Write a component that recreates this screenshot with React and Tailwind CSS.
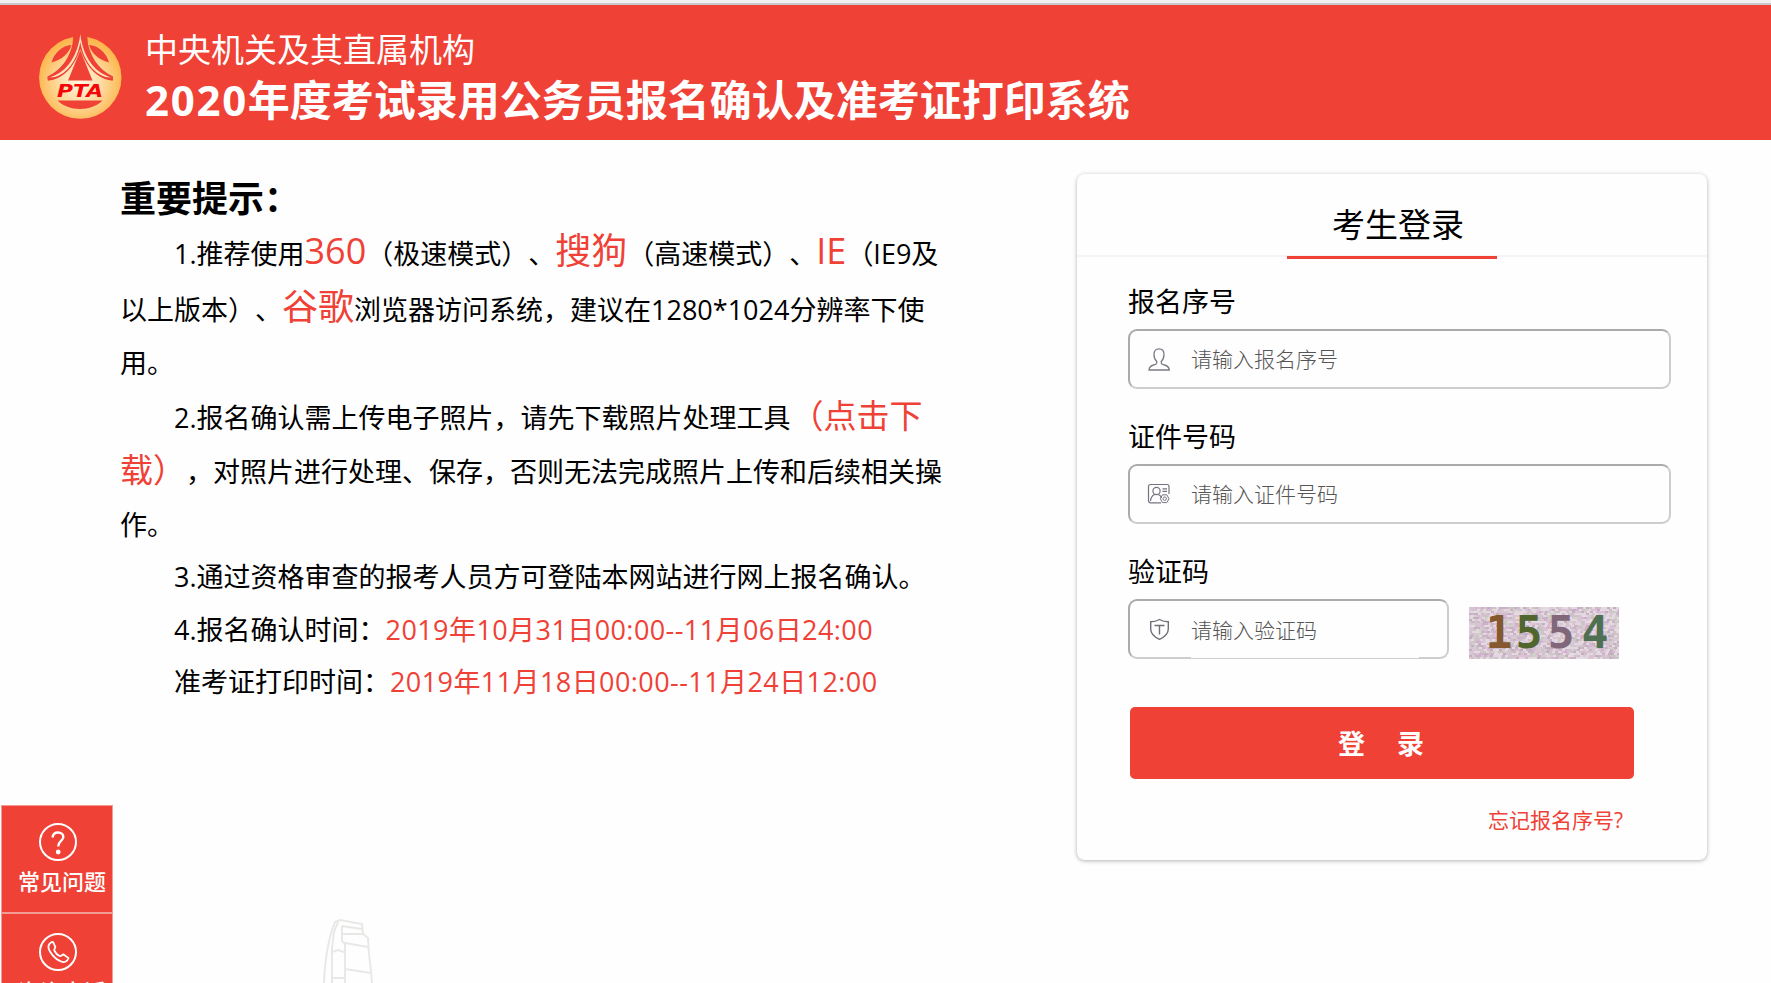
const noise = (() => {
  const colors = ["#d8c4d4", "#c9a9c6", "#e4dbe3", "#cfd0c8", "#d3b3cd", "#bba6b8", "#e6dfdc", "#c4c6bb", "#d9bfd3", "#eadfea"]
  const cells = []
  let seed = 1554
  for (let y = 0; y < 52; y += 2) {
    for (let x = 0; x < 150; x += 3) {
      seed = (seed * 16807) % 2147483647
      cells.push({ x: x + (y % 3), y, fill: colors[seed % colors.length] })
    }
  }
  return cells
})()

function Logo() {
  return (
    <svg className="w-[84px] h-[86px] shrink-0" viewBox="0 0 84 86">
      <defs>
        <radialGradient id="gold" cx="50%" cy="55%" r="52%">
          <stop offset="0" stopColor="#fff6e6" />
          <stop offset="0.5" stopColor="#fedca2" />
          <stop offset="1" stopColor="#fdb64d" />
        </radialGradient>
      </defs>
      <circle cx="42.3" cy="43.6" r="41.2" fill="url(#gold)" />
      <g fill="#ef4136">
        <path d="M35.500 0 L34.500 10 C32 22 25 35 9.500 42.500 L10 46.500 C22 45 32 35 37 24 C39.500 18 41.300 11 42.300 7 C43.300 11 45.100 18 47.600 24 C52.600 35 62.600 45 74.600 46.500 L75 42.500 C59.600 35 52.600 22 50 10 L49 0 Z" />
        <path d="M13.500 28.500 C16 19 24 11.500 33.500 11 C31 19 24 26 13.500 28.500 Z" />
        <path d="M71 28.500 C68.500 19 60.500 11.500 51 11 C53.500 19 60.500 26 71 28.500 Z" />
        <path d="M19.500 66.500 H64.500 C59 72 51 75 42 75 C33 75 25 72 19.500 66.500 Z" />
      </g>
      <path
        d="M42.300 0 C41 13 35 30 22 38.500 C18 41 14 42.800 9.500 44 L22 44.500 C34 38 39.500 26 42.300 13 C45.100 26 50.600 38 62.600 44.500 L75 44 C70.600 42.800 66.600 41 62.600 38.500 C49.600 30 43.600 13 42.300 0 Z"
        fill="#fde3b8"
      />
      <path
        d="M42.300 8 C40.500 20 34 35 21 41.500 C17 43.300 13.500 43.800 9.500 43 L9.800 46.500 C24 46 36 34 42.300 15 C48.600 34 60.600 46 74.800 46.500 L75 43 C71 43.800 67.600 43.300 63.600 41.500 C50.600 35 44.100 20 42.300 8 Z"
        fill="#ef4136"
      />
      <path d="M42.300 16.500 L54.500 46.500 H30 Z" fill="#ef4136" />
      <text
        x="19"
        y="62.500"
        textLength="46"
        lengthAdjust="spacingAndGlyphs"
        fill="#f5050a"
        fontSize="17"
        fontWeight="bold"
        fontStyle="italic"
        fontFamily="DejaVu Sans, sans-serif"
      >
        PTA
      </text>
    </svg>
  )
}

function UserIcon() {
  return (
    <svg className="w-6 h-6" viewBox="0 0 24 24" fill="none" stroke="#7b7b86" strokeWidth="1.300">
      <path d="M9.800 14.500 C7.800 12.800 7 10.500 7 7.500 C7 3.500 9 1.800 12 1.800 C15 1.800 17 3.500 17 7.500 C17 10.500 16.200 12.800 14.200 14.500 C14.200 17 15 17.300 17.500 18 C20.500 18.800 22 20 22.300 23 H2 C2.300 20 3.500 18.800 6.500 18 C9 17.300 9.800 17 9.800 14.500 Z" />
    </svg>
  )
}

function CardIcon() {
  return (
    <svg className="w-6 h-6" viewBox="0 0 24 24" fill="none" stroke="#747480" strokeWidth="1.200">
      <path d="M14 20.800 H3.500 A2 2 0 0 1 1.500 18.800 V4.500 A2 2 0 0 1 3.500 2.500 H20 A2 2 0 0 1 22 4.500 V12" />
      <circle cx="9.500" cy="9" r="3.600" />
      <path d="M3.500 19 C3.800 15.500 5.300 13.500 7.500 12.500 M11.500 12.500 C13 13.300 14 14.500 14.500 16" />
      <path d="M15.500 6.800 H20 M15.500 9.300 H20" />
      <path d="M15.500 12.800 H19.800 L22 16.700 L19.800 20.600 H15.500 L13.300 16.700 Z" strokeWidth="1" />
      <circle cx="17.700" cy="16.700" r="1.700" strokeWidth="1" />
    </svg>
  )
}

function ShieldIcon() {
  return (
    <svg className="w-6 h-6" viewBox="0 0 24 24" fill="none" stroke="#6f6f79" strokeWidth="1.400">
      <path d="M12.500 2.500 C15 4 18 4.800 21.300 4.800 V12 C21.300 17 18 19.800 12.500 22.300 C7 19.800 3.700 17 3.700 12 V4.800 C7 4.800 10 4 12.500 2.500 Z" />
      <path d="M7.500 8.500 H17.500 M12.500 8.500 V17.500" />
    </svg>
  )
}

function Captcha() {
  return (
    <svg className="w-[150px] h-[52px] mt-2 ml-5" viewBox="0 0 150 52">
      <rect width="150" height="52" fill="#dccbd9" />
      <g opacity="0.75">
        {noise.map((n, i) => (
          <rect key={i} x={n.x} y={n.y} width="3" height="2" fill={n.fill} />
        ))}
      </g>
      <g fontFamily="DejaVu Sans Mono, monospace" fontWeight="bold" fontSize="45" textAnchor="middle">
        <text x="30" y="41" fill="#85582f">1</text>
        <text x="60" y="41" fill="#51652f">5</text>
        <text x="92" y="41" fill="#80687a">5</text>
        <text x="126" y="41" fill="#4f6f52">4</text>
      </g>
    </svg>
  )
}

function Field({ label, placeholder, icon, short, children }) {
  return (
    <div className="h-[135px]">
      <label className="block h-[54px] leading-[54px] text-[27px]">{label}</label>
      <div className="flex">
        <div
          className={`flex items-center h-[60px] rounded-[9px] border-2 border-t-[#ababab] border-l-[#ababab] border-r-[#cdcdcd] border-b-[#cdcdcd] pl-[17px] ${
            short ? "w-[321px]" : "w-[543px]"
          }`}
        >
          {icon}
          <input
            className={`ml-[20px] w-[228px] text-[21px] outline-none font-light placeholder:text-[#555] ${
              short ? "h-[57px] -mb-px bg-[#fefefe]" : "h-full bg-transparent"
            }`}
            placeholder={placeholder}
          />
        </div>
        {children}
      </div>
    </div>
  )
}

function Big({ children }) {
  return <span className="text-[36px] leading-none text-[#ef4136]">{children}</span>
}

function Download({ children }) {
  return <a className="text-[33px] leading-none text-[#ef4136]">{children}</a>
}

function Notice() {
  return (
    <section className="w-[1077px] shrink-0 pl-[120px] pt-[31px] text-[27px] whitespace-nowrap [text-spacing-trim:space-all]">
      <h2 className="h-[55px] leading-[56px] text-[36px] font-bold">重要提示：</h2>
      <p className="h-[56px] leading-[56px] pl-[54px]">
        1.推荐使用<Big>360</Big>（极速模式）、<Big>搜狗</Big>（高速模式）、<Big>IE</Big>（IE9及
      </p>
      <p className="h-[55px] leading-[55px]">
        以上版本）、<Big>谷歌</Big>浏览器访问系统，建议在1280*1024分辨率下使
      </p>
      <p className="h-[52px] leading-[52px]">用。</p>
      <p className="h-[57px] leading-[57px] pl-[54px]">
        2.报名确认需上传电子照片，请先下载照片处理工具<Download>（点击下</Download>
      </p>
      <p className="h-[52px] leading-[52px]">
        <Download>载）</Download>，对照片进行处理、保存，否则无法完成照片上传和后续相关操
      </p>
      <p className="h-[53px] leading-[53px]">作。</p>
      <p className="h-[52px] leading-[52px] pl-[54px]">3.通过资格审查的报考人员方可登陆本网站进行网上报名确认。</p>
      <p className="h-[54px] leading-[54px] pl-[54px]">
        4.报名确认时间：<span className="text-[#ef4136] tracking-[0.42px]">2019年10月31日00:00--11月06日24:00</span>
      </p>
      <p className="h-[50px] leading-[50px] pl-[54px]">
        准考证打印时间：<span className="text-[#ef4136] tracking-[0.42px]">2019年11月18日00:00--11月24日12:00</span>
      </p>
    </section>
  )
}

function LoginCard() {
  return (
    <section className="mt-[34px] w-[630px] h-[686px] shrink-0 rounded-[8px] bg-[#fefefe] shadow-[0_1px_4px_rgba(0,0,0,0.3)]">
      <div className="h-[83px] border-b-2 border-[#f5f5f5] flex justify-center">
        <h3 className="h-[85px] w-[210px] pl-[12px] border-b-[3px] border-[#ef4136] text-center text-[33px] leading-[101px]">考生登录</h3>
      </div>
      <form className="pt-[18px] pl-[51px]">
        <Field label="报名序号" placeholder="请输入报名序号" icon={<UserIcon />} />
        <Field label="证件号码" placeholder="请输入证件号码" icon={<CardIcon />} />
        <Field label="验证码" placeholder="请输入验证码" icon={<ShieldIcon />} short>
          <Captcha />
        </Field>
        <button
          type="button"
          className="block mt-[27px] ml-[2px] w-[504px] h-[72px] rounded-[5px] bg-[#ef4136] pt-[3px] pr-[2px] text-white text-[27px] font-bold"
        >
          <span className="mr-8">登</span>录
        </button>
        <a className="block w-[495px] mt-[26px] text-right text-[21px] leading-[30px] text-[#ef4136]">忘记报名序号?</a>
      </form>
    </section>
  )
}

function SideBar() {
  return (
    <aside className="absolute left-[1px] top-[805px] w-[112px] border border-[#f59b95] bg-[#ef4136] text-white text-[22px] font-medium">
      <div className="h-[108px] border-b-2 border-[#f59b95] pt-4">
        <svg className="w-10 h-10 ml-[36px]" viewBox="0 0 40 40" fill="none" stroke="white" strokeWidth="2">
          <circle cx="20" cy="20" r="18" />
          <path d="M14.700 15.500 C14.700 12 17 10.500 20 10.500 C23 10.500 25.300 12.300 25.300 15 C25.300 19 20.200 19 20.200 24.500" strokeWidth="2.400" />
          <circle cx="20.200" cy="30" r="1.400" fill="white" />
        </svg>
        <div className="pl-4 leading-[39px]">常见问题</div>
      </div>
      <div className="h-[108px] pt-[18px]">
        <svg className="w-10 h-10 ml-[36px]" viewBox="0 0 40 40" fill="none" stroke="white" strokeWidth="2">
          <circle cx="20" cy="20" r="18" />
          <path
            d="M13 10.500 C10 12.500 9.500 15.500 12 19.500 C15 24.500 19 28 23.500 29.700 C26.500 30.700 29.500 29 30.500 26 L25.500 22.500 C24 22.500 23.500 24.500 21.500 24 C19.500 23 17.500 21 16.300 18.500 C15.800 16.800 17.300 16.500 17.300 15 L15.300 10.500 C14.700 9.900 13.700 10 13 10.500 Z"
            strokeWidth="1.800"
          />
        </svg>
        <div className="pl-4 leading-[38px]">咨询电话</div>
      </div>
    </aside>
  )
}

function Tower() {
  return (
    <svg className="absolute left-[320px] top-[917px] w-[56px] h-[66px]" viewBox="0 0 56 66" fill="none" stroke="#e9e8e6" strokeWidth="2">
      <path d="M4 66 C5 40 9 20 15 5 L20 3 L42 7 L43 17 L48 21 L49 37 L51 54 L52 66" />
      <path d="M12 66 V31 L14 15 L18 5 M22 9 L42 12 M22 17 H44 M22 9 V24 L25 27 V66 M25 26 L48 30 M25 52 L51 56 M12 35 L18 33 L24 35 M12 61 H25" />
    </svg>
  )
}

export default function App() {
  return (
    <div className="relative w-full h-[983px] overflow-hidden bg-[#fefefe] text-black font-['Open_Sans','Noto_Sans_CJK_SC',sans-serif]">
      <div className="h-[5px] border-b-2 border-[#c9c9c9] bg-[#f0f0f0]" />
      <header className="flex h-[135px] bg-[#ef4136] text-white pl-[38px] pt-[29px]">
        <Logo />
        <div className="ml-[23px] -mt-[6px] whitespace-nowrap">
          <div className="h-[43px] leading-[43px] text-[33px]">中央机关及其直属机构</div>
          <h1 className="h-[58px] leading-[58px] text-[42px] font-bold">
            <span className="tracking-[1.7px]">2020</span>年度考试录用公务员报名确认及准考证打印系统
          </h1>
        </div>
      </header>
      <main className="flex">
        <Notice />
        <LoginCard />
      </main>
      <Tower />
      <SideBar />
    </div>
  )
}
